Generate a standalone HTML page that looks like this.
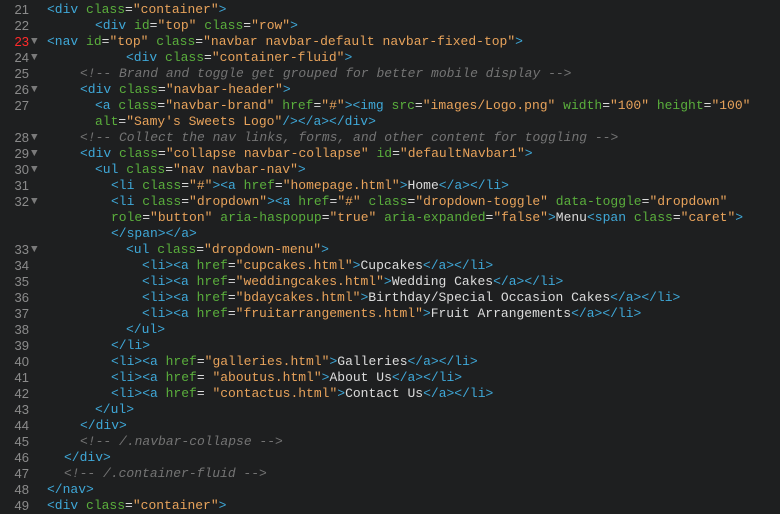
<!DOCTYPE html>
<html><head><style>
body{margin:0;background:#1e1f20;width:780px;height:511px;overflow:hidden;font-family:"Liberation Mono",monospace;font-size:13px;}
.r{position:absolute;height:16px;line-height:16px;white-space:pre;color:#dcdcdc;}
.n{position:absolute;left:0;width:29px;text-align:right;color:#8b8b8b;height:16px;line-height:16px;font-family:"Liberation Sans",sans-serif;font-size:13px;}
.f{position:absolute;left:31px;color:#7a7a7a;font-size:11px;height:16px;line-height:16px;}
.t{color:#3fa8d8}.a{color:#5aae3c}.s{color:#e8a35b}.c{color:#747474;font-style:italic}
</style></head><body>
<div id="g"></div>
<script>
const T=s=>'<span class="t">'+s+'</span>',A=s=>'<span class="a">'+s+'</span>',S=s=>'<span class="s">'+s+'</span>',C=s=>'<span class="c">'+s+'</span>';
const e=s=>s.replace(/&/g,'&amp;').replace(/</g,'&lt;').replace(/>/g,'&gt;');
const tg=x=>T(e(x));const at=(k,v)=>A(k)+'='+S('"'+v+'"');
const rows=[
[21,47,tg('<div ')+at('class','container')+tg('>')],
[22,95,tg('<div ')+at('id','top')+' '+at('class','row')+tg('>')],
[23,47,tg('<nav ')+at('id','top')+' '+at('class','navbar navbar-default navbar-fixed-top')+tg('>')],
[24,126,tg('<div ')+at('class','container-fluid')+tg('>')],
[25,80,C(e('<!-- Brand and toggle get grouped for better mobile display -->'))],
[26,80,tg('<div ')+at('class','navbar-header')+tg('>')],
[27,95,tg('<a ')+at('class','navbar-brand')+' '+at('href','#')+tg('><img ')+at('src','images/Logo.png')+' '+at('width','100')+' '+at('height','100')],
[0,95,at('alt',"Samy's Sweets Logo")+tg('/></a></div>')],
[28,80,C(e('<!-- Collect the nav links, forms, and other content for toggling -->'))],
[29,80,tg('<div ')+at('class','collapse navbar-collapse')+' '+at('id','defaultNavbar1')+tg('>')],
[30,95,tg('<ul ')+at('class','nav navbar-nav')+tg('>')],
[31,111,tg('<li ')+at('class','#')+tg('><a ')+at('href','homepage.html')+tg('>')+'Home'+tg('</a></li>')],
[32,111,tg('<li ')+at('class','dropdown')+tg('><a ')+at('href','#')+' '+at('class','dropdown-toggle')+' '+at('data-toggle','dropdown')],
[0,111,at('role','button')+' '+at('aria-haspopup','true')+' '+at('aria-expanded','false')+tg('>')+'Menu'+tg('<span ')+at('class','caret')+tg('>')],
[0,111,tg('</span></a>')],
[33,126,tg('<ul ')+at('class','dropdown-menu')+tg('>')],
[34,142,tg('<li><a ')+at('href','cupcakes.html')+tg('>')+'Cupcakes'+tg('</a></li>')],
[35,142,tg('<li><a ')+at('href','weddingcakes.html')+tg('>')+'Wedding Cakes'+tg('</a></li>')],
[36,142,tg('<li><a ')+at('href','bdaycakes.html')+tg('>')+'Birthday/Special Occasion Cakes'+tg('</a></li>')],
[37,142,tg('<li><a ')+at('href','fruitarrangements.html')+tg('>')+'Fruit Arrangements'+tg('</a></li>')],
[38,126,tg('</ul>')],
[39,111,tg('</li>')],
[40,111,tg('<li><a ')+at('href','galleries.html')+tg('>')+'Galleries'+tg('</a></li>')],
[41,111,tg('<li><a ')+A('href')+'= '+S('"aboutus.html"')+tg('>')+'About Us'+tg('</a></li>')],
[42,111,tg('<li><a ')+A('href')+'= '+S('"contactus.html"')+tg('>')+'Contact Us'+tg('</a></li>')],
[43,95,tg('</ul>')],
[44,80,tg('</div>')],
[45,80,C(e('<!-- /.navbar-collapse -->'))],
[46,64,tg('</div>')],
[47,64,C(e('<!-- /.container-fluid -->'))],
[48,47,tg('</nav>')],
[49,47,tg('<div ')+at('class','container')+tg('>')]
];
const folds=[23,24,26,28,29,30,32,33];
let h='';rows.forEach((r,i)=>{const y=i*16+2;
if(r[0]){h+='<div class="n" style="top:'+y+'px;'+(r[0]==23?'color:#ff2a2a':'')+'">'+r[0]+'</div>';
if(folds.includes(r[0]))h+='<div class="f" style="top:'+y+'px">▼</div>';}
h+='<div class="r" style="top:'+y+'px;left:'+r[1]+'px">'+r[2]+'</div>';});
document.getElementById('g').innerHTML=h;
</script>
</body></html>
